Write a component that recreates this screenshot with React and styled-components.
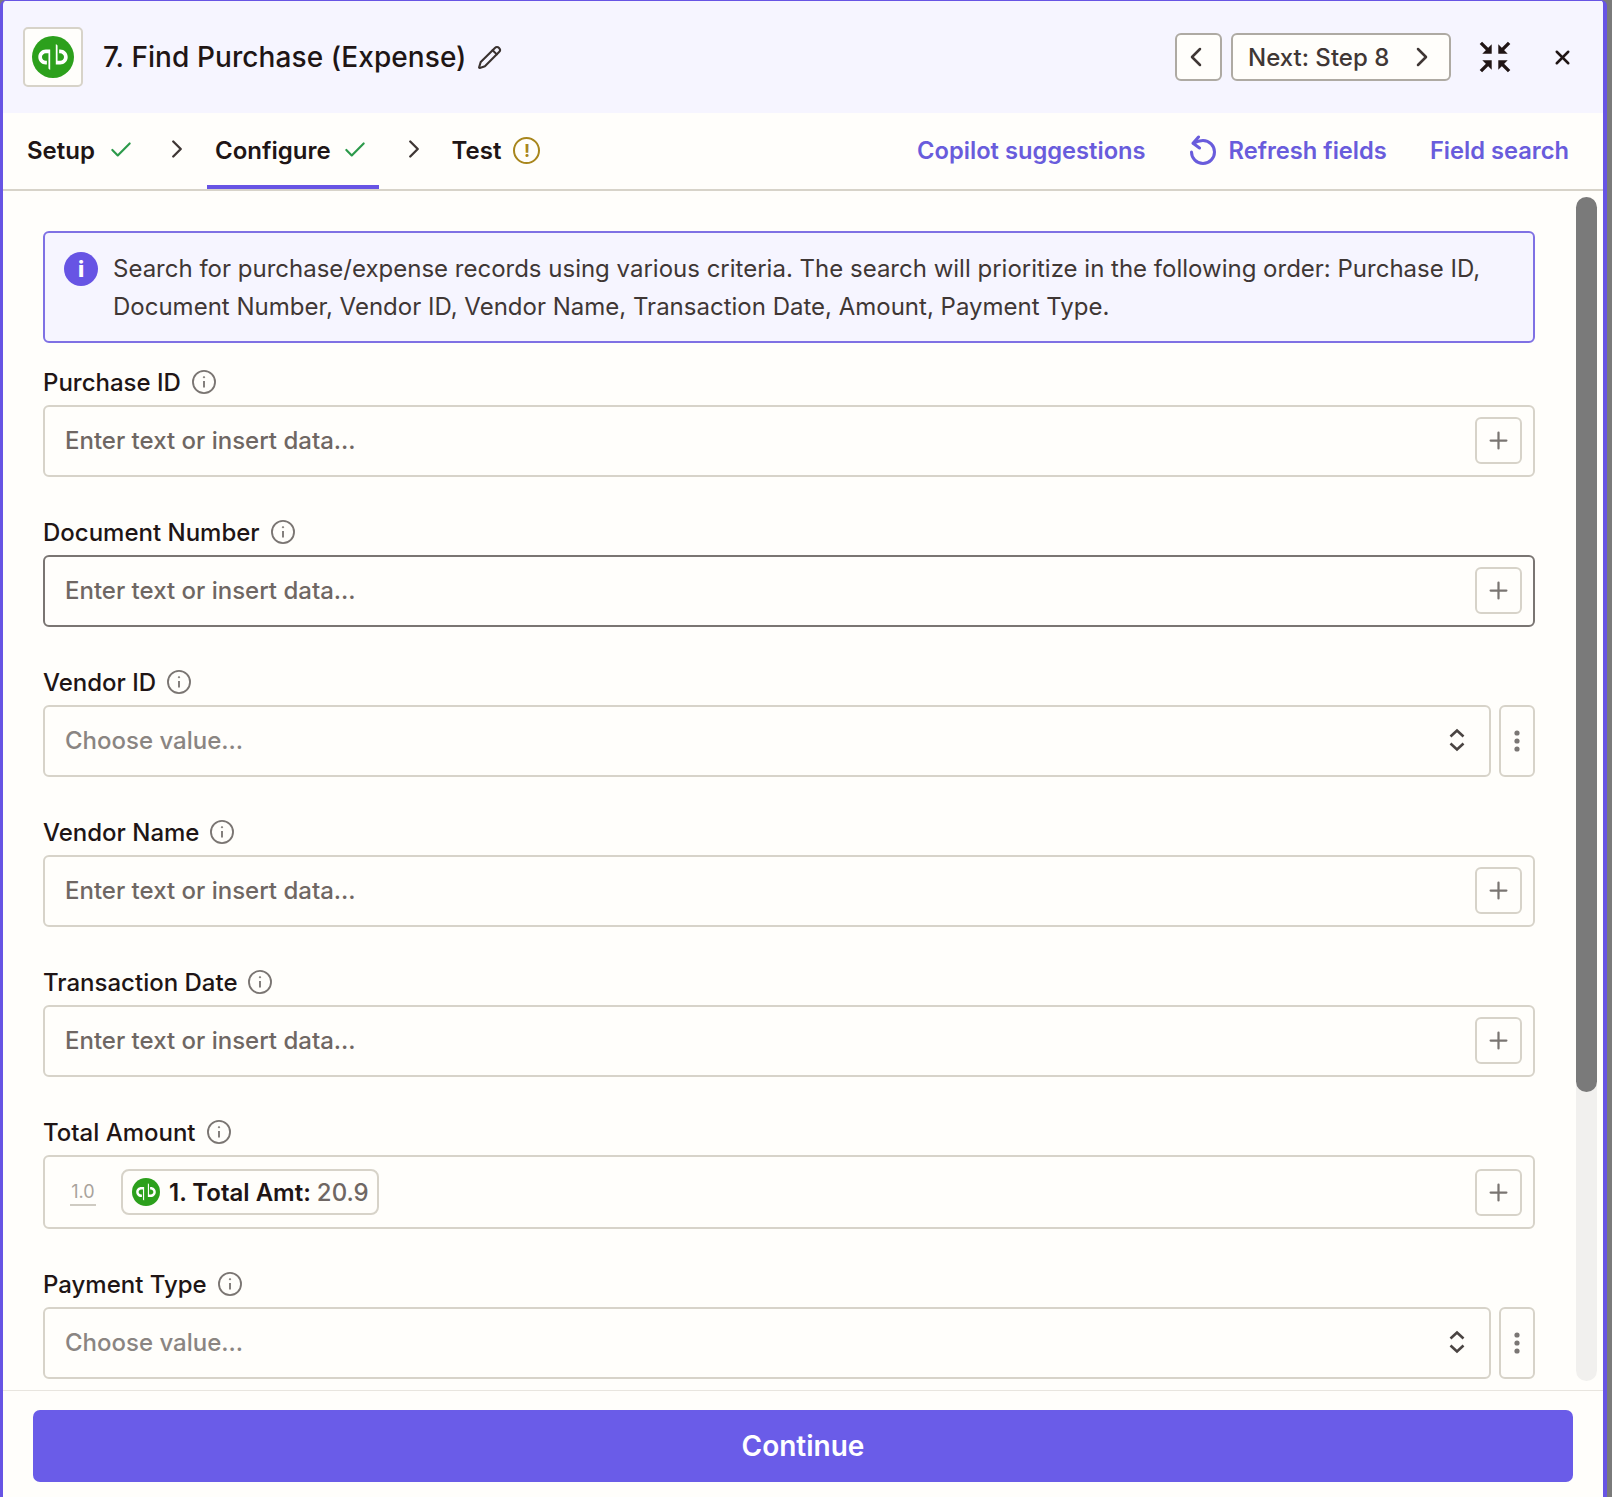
import React from 'react'
import styled, { createGlobalStyle } from 'styled-components'
import { Check, ChevronLeft, ChevronRight, Pencil, Plus, X } from 'lucide-react'

const GlobalStyle = createGlobalStyle`
  html, body {
    margin: 0;
    padding: 0;
    background: #7a7a7a;
  }
  * {
    box-sizing: border-box;
  }
`

const QbLogo = ({ size }) => (
  <svg width={size} height={size} viewBox="0 0 24 24">
    <circle cx="12" cy="12" r="12" fill="#2ca01c" />
    <path
      fill="#fff"
      d="M3.6 12c0 2.4 1.9 4.3 4.3 4.3h.6v-2.1h-.6c-1.2 0-2.2-1-2.2-2.2s1-2.2 2.2-2.2h1.5v8.5c0 .6.5 1 1 1V7.7H7.9C5.5 7.7 3.6 9.6 3.6 12zM16.1 7.7h-.6v2.1h.6c1.2 0 2.2 1 2.2 2.2s-1 2.2-2.2 2.2h-1.5V5.7c0-.6-.5-1-1-1v11.6h2.5c2.4 0 4.3-1.9 4.3-4.3s-1.9-4.3-4.3-4.3z"
    />
  </svg>
)

const InfoCircle = ({ size = 26 }) => (
  <svg width={size} height={size} viewBox="0 0 24 24" fill="none" stroke="#7a7572" strokeWidth="1.7">
    <circle cx="12" cy="12" r="10.2" />
    <path d="M12 11v6" />
    <circle cx="12" cy="7.6" r="0.6" fill="#7a7572" strokeWidth="0.8" />
  </svg>
)

const CollapseIcon = () => (
  <svg width="32" height="32" viewBox="0 0 34 34" fill="none" stroke="#201515" strokeWidth="3.6">
    <path d="M2 2l8 8M32 2l-8 8M2 32l8-8M32 32l-8-8" />
    <path fill="#201515" stroke="none" d="M3.5 13.5h10v-10zM30.5 13.5h-10v-10zM3.5 20.5h10v10zM30.5 20.5h-10v10z" />
  </svg>
)

const RefreshIcon = () => (
  <svg width="28" height="30" viewBox="0 0 28 30" fill="none" stroke="#695cdc" strokeWidth="3" strokeLinecap="round" strokeLinejoin="round">
    <path d="M4.5 8.3Q9 5.5 14 5.5A11.5 11.5 0 1 1 2.5 17" />
    <path d="M9.5 2L4 8.3l6.5 4.7" />
  </svg>
)

const UpDownIcon = () => (
  <svg width="16" height="24" viewBox="0 0 16 24" fill="none" stroke="#4a4442" strokeWidth="2.6">
    <path d="M1.5 8.5L8 2.5l6.5 6M1.5 15.5L8 21.5l6.5-6" />
  </svg>
)

const DotsIcon = () => (
  <svg width="6" height="22" viewBox="0 0 6 22" fill="#7a7674">
    <circle cx="3" cy="3" r="2.6" />
    <circle cx="3" cy="11" r="2.6" />
    <circle cx="3" cy="19" r="2.6" />
  </svg>
)

const FIELDS = [
  { label: 'Purchase ID', kind: 'text' },
  { label: 'Document Number', kind: 'text', focused: true },
  { label: 'Vendor ID', kind: 'select' },
  { label: 'Vendor Name', kind: 'text' },
  { label: 'Transaction Date', kind: 'text' },
  { label: 'Total Amount', kind: 'chip' },
  { label: 'Payment Type', kind: 'select' },
]

const Field = ({ label, kind, focused }) => (
  <FieldGroup>
    <LabelRow>
      <Label>{label}</Label>
      <InfoCircle />
    </LabelRow>
    {kind === 'select' ? (
      <SelectRow>
        <InputBox>
          <Placeholder $muted>Choose value...</Placeholder>
          <SelectArrow><UpDownIcon /></SelectArrow>
        </InputBox>
        <DotsButton><DotsIcon /></DotsButton>
      </SelectRow>
    ) : (
      <InputBox $focused={focused} $tall={kind === 'chip'}>
        {kind === 'chip' ? (
          <>
            <NumberTag>1.0</NumberTag>
            <Pill>
              <QbLogo size={28} />
              <PillKey>1. Total Amt:</PillKey>
              <PillValue>20.9</PillValue>
            </Pill>
          </>
        ) : (
          <Placeholder>Enter text or insert data...</Placeholder>
        )}
        <PlusButton><Plus size={27} strokeWidth={2} /></PlusButton>
      </InputBox>
    )}
  </FieldGroup>
)

export default function App() {
  return (
    <Panel>
      <GlobalStyle />
      <Header>
        <LogoBox><QbLogo size={42} /></LogoBox>
        <Title>7. Find Purchase (Expense)</Title>
        <EditIcon><Pencil size={25} strokeWidth={2} /></EditIcon>
        <HeaderActions>
          <NavButton $square><ChevronLeft size={32} strokeWidth={1.9} /></NavButton>
          <NavButton>
            Next: Step 8
            <ChevronRight size={32} strokeWidth={1.9} />
          </NavButton>
          <IconSlot><CollapseIcon /></IconSlot>
          <CloseSlot><X size={23} strokeWidth={2.6} /></CloseSlot>
        </HeaderActions>
      </Header>
      <Tabs>
        <Tab>
          Setup
          <Check size={26} strokeWidth={2} color="#2c9a4b" />
        </Tab>
        <TabChevron><ChevronRight size={30} strokeWidth={1.9} /></TabChevron>
        <Tab $active>
          Configure
          <Check size={26} strokeWidth={2} color="#2c9a4b" />
        </Tab>
        <TabChevron><ChevronRight size={30} strokeWidth={1.9} /></TabChevron>
        <Tab $last>
          Test
          <WarnBadge>!</WarnBadge>
        </Tab>
        <TabLinks>
          <TabLink>Copilot suggestions</TabLink>
          <TabLink $icon><RefreshIcon />Refresh fields</TabLink>
          <TabLink>Field search</TabLink>
        </TabLinks>
      </Tabs>
      <Body>
        <Form>
          <InfoBox>
            <InfoDot>i</InfoDot>
            <InfoText>
              Search for purchase/expense records using various criteria. The search will prioritize in the
              following order: Purchase ID, Document Number, Vendor ID, Vendor Name, Transaction Date, Amount,
              Payment Type.
            </InfoText>
          </InfoBox>
          {FIELDS.map((field) => (
            <Field key={field.label} {...field} />
          ))}
        </Form>
        <ScrollTrack>
          <ScrollThumb />
        </ScrollTrack>
      </Body>
      <Footer>
        <ContinueButton>Continue</ContinueButton>
      </Footer>
    </Panel>
  )
}

const Panel = styled.div`
  width: 1607px;
  height: 1497px;
  display: flex;
  flex-direction: column;
  overflow: hidden;
  background: #fffefb;
  border-left: 3px solid #6754e4;
  border-right: 4px solid #6754e4;
  border-top: 1px solid #6754e4;
  border-top-left-radius: 6px;
  border-top-right-radius: 6px;
  font-family: Inter, 'Liberation Sans', sans-serif;
  color: #201515;
`

const Header = styled.div`
  height: 112px;
  flex: none;
  display: flex;
  align-items: center;
  padding: 0 29px 0 20px;
  background: #f6f5ff;
`

const LogoBox = styled.div`
  width: 60px;
  height: 60px;
  display: flex;
  align-items: center;
  justify-content: center;
  background: #fffefb;
  border: 2px solid #d7d3c9;
  border-radius: 5px;
`

const Title = styled.h1`
  margin: 0 0 0 20px;
  font-size: 28px;
  font-weight: 500;
  line-height: 36px;
  letter-spacing: 0.08px;
`

const EditIcon = styled.span`
  display: flex;
  margin-left: 10px;
  color: #3a3230;
`

const HeaderActions = styled.div`
  margin-left: auto;
  display: flex;
  align-items: center;
`

const NavButton = styled.div`
  height: 48px;
  width: ${(props) => (props.$square ? '47px' : '220px')};
  margin-right: ${(props) => (props.$square ? '9px' : '0')};
  display: flex;
  align-items: center;
  justify-content: ${(props) => (props.$square ? 'center' : 'space-between')};
  padding: ${(props) => (props.$square ? '0 5px 0 0' : '0 11px 0 15px')};
  background: #fffefb;
  border: 2px solid #aeaaa3;
  border-radius: 6px;
  font-size: 24px;
  font-weight: 500;
  color: #3f3735;
`

const IconSlot = styled.div`
  display: flex;
  margin-left: 28px;
`

const CloseSlot = styled.div`
  display: flex;
  margin-left: 40px;
`

const Tabs = styled.div`
  height: 78px;
  flex: none;
  display: flex;
  align-items: stretch;
  padding-right: 34px;
  border-bottom: 2px solid #d7d3c9;
`

const Tab = styled.div`
  display: flex;
  align-items: center;
  gap: ${(props) => (props.$active ? '11px' : '13px')};
  margin-left: ${(props) => (props.$active ? '15px' : props.$last ? '15px' : '16px')};
  padding: 2px ${(props) => (props.$active ? '11px' : '8px')} 0 8px;
  font-size: 24px;
  font-weight: 600;
  border-bottom: 4px solid ${(props) => (props.$active ? '#6754e4' : 'transparent')};
`

const TabChevron = styled.div`
  display: flex;
  align-items: center;
  margin-left: 20px;
  padding-bottom: 4px;
  color: #3f3735;
`

const WarnBadge = styled.span`
  width: 27px;
  height: 27px;
  display: flex;
  align-items: center;
  justify-content: center;
  margin-left: -1px;
  border: 2.5px solid #a8861d;
  border-radius: 50%;
  color: #a8861d;
  font-size: 18px;
  font-weight: 700;
`

const TabLinks = styled.div`
  margin-left: auto;
  display: flex;
  align-items: center;
  gap: 43px;
  padding-bottom: 2px;
`

const TabLink = styled.span`
  display: flex;
  align-items: center;
  gap: ${(props) => (props.$icon ? '12px' : '0')};
  font-size: 23.7px;
  font-weight: 600;
  color: #695cdc;
`

const Body = styled.div`
  flex: 1;
  min-height: 0;
  display: flex;
  overflow: hidden;
`

const Form = styled.div`
  width: 1532px;
  flex: none;
  display: flex;
  flex-direction: column;
  padding: 40px 0 0 40px;
`

const InfoBox = styled.div`
  height: 112px;
  flex: none;
  display: flex;
  gap: 15px;
  padding: 17px 20px 0 19px;
  background: #f6f5ff;
  border: 2px solid #7f71e4;
  border-radius: 6px;
  margin-bottom: 24px;
`

const InfoDot = styled.span`
  width: 34px;
  height: 34px;
  flex: none;
  display: flex;
  align-items: center;
  justify-content: center;
  margin-top: 2px;
  border-radius: 50%;
  background: #6754e4;
  color: #fff;
  font-size: 22px;
  font-weight: 800;
`

const InfoText = styled.p`
  margin: 0;
  font-size: 24px;
  line-height: 38px;
  color: #3f3735;
`

const FieldGroup = styled.div`
  flex: none;
  display: flex;
  flex-direction: column;
  margin-bottom: 40px;
`

const LabelRow = styled.div`
  height: 30px;
  display: flex;
  align-items: center;
  gap: 10px;
  margin-bottom: 8px;
`

const Label = styled.label`
  font-size: 24px;
  font-weight: 500;
  color: #201515;
`

const SelectRow = styled.div`
  display: flex;
  gap: 8px;
`

const InputBox = styled.div`
  flex: 1 0 auto;
  height: ${(props) => (props.$tall ? '74px' : '72px')};
  display: flex;
  align-items: center;
  padding: 0 11px ${(props) => (props.$tall ? '0' : '2px')} 20px;
  background: #fffefb;
  border: 2px solid ${(props) => (props.$focused ? '#7a7572' : '#d7d3c9')};
  border-radius: 6px;
`

const Placeholder = styled.span`
  font-size: 24px;
  font-weight: 500;
  color: ${(props) => (props.$muted ? '#8a8582' : '#6f6763')};
`

const SelectArrow = styled.span`
  display: flex;
  margin-left: auto;
  margin-right: 13px;
`

const DotsButton = styled.div`
  width: 36px;
  flex: none;
  display: flex;
  align-items: center;
  justify-content: center;
  background: #fffefb;
  border: 2px solid #d7d3c9;
  border-radius: 6px;
`

const PlusButton = styled.div`
  width: 47px;
  height: 47px;
  margin-left: auto;
  display: flex;
  align-items: center;
  justify-content: center;
  color: #7a7572;
  border: 2px solid #d7d3c9;
  border-radius: 6px;
`

const NumberTag = styled.span`
  width: 26px;
  margin: 2px 0 0 5px;
  padding-bottom: 2px;
  text-align: center;
  font-size: 18px;
  color: #a8a39c;
  border-bottom: 2px solid #cfcbc2;
`

const Pill = styled.div`
  height: 46px;
  display: flex;
  align-items: center;
  margin-left: 25px;
  padding: 0 8px 0 9px;
  border: 2px solid #d7d3c9;
  border-radius: 8px;
`

const PillKey = styled.span`
  margin-left: 9px;
  font-size: 24px;
  font-weight: 600;
`

const PillValue = styled.span`
  margin-left: 6px;
  font-size: 24px;
  font-weight: 500;
  color: #6f6763;
`

const ScrollTrack = styled.div`
  width: 21px;
  height: 1184px;
  flex: none;
  margin: 6px 0 0 41px;
  background: #f1f0ee;
  border-radius: 11px;
`

const ScrollThumb = styled.div`
  height: 895px;
  background: #7a7a7a;
  border-radius: 11px;
`

const Footer = styled.div`
  height: 107px;
  flex: none;
  padding: 19px 30px 0;
  border-top: 1px solid #e8e5df;
`

const ContinueButton = styled.div`
  height: 72px;
  display: flex;
  align-items: center;
  justify-content: center;
  background: #6a5ce8;
  border-radius: 7px;
  color: #fff;
  font-size: 28px;
  font-weight: 600;
`
